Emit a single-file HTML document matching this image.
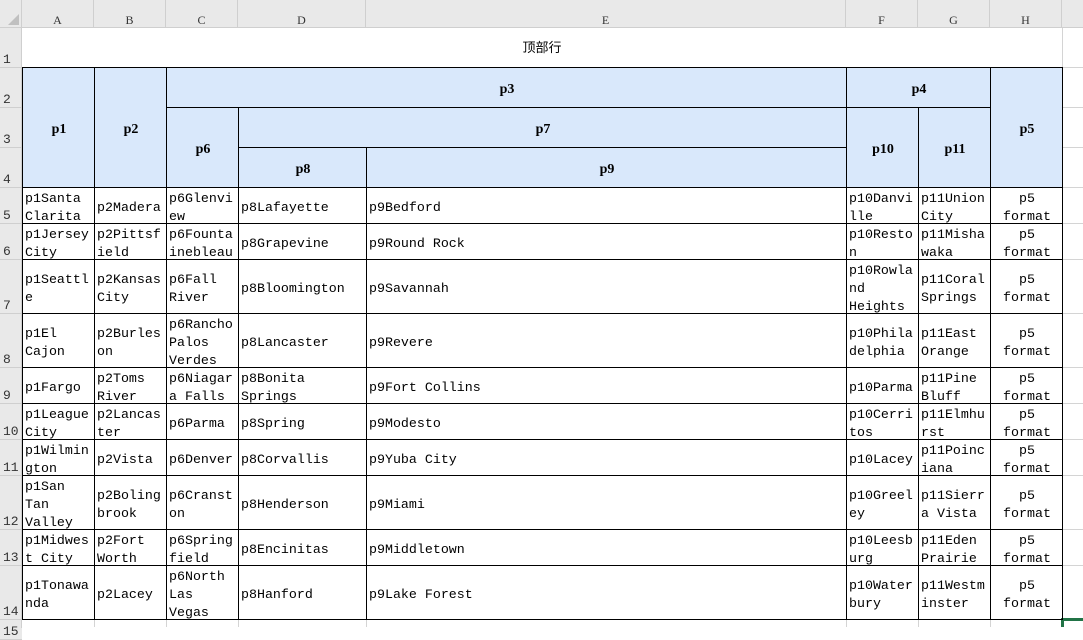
<!DOCTYPE html>
<html><head><meta charset="utf-8"><style>
body{margin:0;width:1083px;height:627px;overflow:hidden;background:#fff;position:relative;font-family:"Liberation Mono","Noto Sans CJK SC",monospace;font-size:13.3px;color:#000}
.c{position:absolute;box-sizing:border-box;border:1px solid #000;display:flex;flex-direction:column;justify-content:center;padding:4px 1px 0 2px;line-height:18px;white-space:pre;overflow:hidden}
.h{background:#d9e8fb;align-items:center;font-weight:bold;justify-content:center;font-family:"Liberation Serif","Noto Serif CJK SC",serif;font-size:14px}
.r{text-align:center;align-items:center}
.g{position:absolute;background:#d4d4d4}
.hd{position:absolute;top:0;height:28px;background:#e9e9e9;border-right:1px solid #cfcfcf;box-sizing:border-box;text-align:center;line-height:40px;font-size:12px;color:#333;font-family:"Liberation Serif",serif}
.rn{position:absolute;left:0;width:22px;background:#e9e9e9;border-bottom:1px solid #cfcfcf;box-sizing:border-box;font-size:13px;color:#333;padding-left:3px;display:flex;align-items:flex-end;line-height:15px}
</style></head><body>
<div class="hd" style="left:0;width:22px"></div>
<div style="position:absolute;left:8px;top:14px;width:0;height:0;border-left:11px solid transparent;border-bottom:11px solid #c0c0c0"></div>
<div class="hd" style="left:22px;width:72px">A</div>
<div class="hd" style="left:94px;width:72px">B</div>
<div class="hd" style="left:166px;width:72px">C</div>
<div class="hd" style="left:238px;width:128px">D</div>
<div class="hd" style="left:366px;width:480px">E</div>
<div class="hd" style="left:846px;width:72px">F</div>
<div class="hd" style="left:918px;width:72px">G</div>
<div class="hd" style="left:990px;width:72px">H</div>
<div class="hd" style="left:1062px;width:21px;border-right:none"></div>
<div style="position:absolute;left:0;top:27px;width:1083px;height:1px;background:#cfcfcf"></div>

<div class="rn" style="top:28px;height:40px">1</div>
<div class="rn" style="top:68px;height:40px">2</div>
<div class="rn" style="top:108px;height:40px">3</div>
<div class="rn" style="top:148px;height:40px">4</div>
<div class="rn" style="top:188px;height:36px">5</div>
<div class="rn" style="top:224px;height:36px">6</div>
<div class="rn" style="top:260px;height:54px">7</div>
<div class="rn" style="top:314px;height:54px">8</div>
<div class="rn" style="top:368px;height:36px">9</div>
<div class="rn" style="top:404px;height:36px">10</div>
<div class="rn" style="top:440px;height:36px">11</div>
<div class="rn" style="top:476px;height:54px">12</div>
<div class="rn" style="top:530px;height:36px">13</div>
<div class="rn" style="top:566px;height:54px">14</div>
<div class="rn" style="top:620px;height:20px">15</div>
<div style="position:absolute;left:21px;top:28px;width:1px;height:600px;background:#cfcfcf"></div>

<div class="g" style="left:1062px;top:67px;width:21px;height:1px"></div>
<div class="g" style="left:1062px;top:107px;width:21px;height:1px"></div>
<div class="g" style="left:1062px;top:147px;width:21px;height:1px"></div>
<div class="g" style="left:1062px;top:187px;width:21px;height:1px"></div>
<div class="g" style="left:1062px;top:223px;width:21px;height:1px"></div>
<div class="g" style="left:1062px;top:259px;width:21px;height:1px"></div>
<div class="g" style="left:1062px;top:313px;width:21px;height:1px"></div>
<div class="g" style="left:1062px;top:367px;width:21px;height:1px"></div>
<div class="g" style="left:1062px;top:403px;width:21px;height:1px"></div>
<div class="g" style="left:1062px;top:439px;width:21px;height:1px"></div>
<div class="g" style="left:1062px;top:475px;width:21px;height:1px"></div>
<div class="g" style="left:1062px;top:529px;width:21px;height:1px"></div>
<div class="g" style="left:1062px;top:565px;width:21px;height:1px"></div>
<div class="g" style="left:1062px;top:28px;width:1px;height:40px"></div>
<div class="g" style="left:94px;top:620px;width:1px;height:7px"></div>
<div class="g" style="left:166px;top:620px;width:1px;height:7px"></div>
<div class="g" style="left:238px;top:620px;width:1px;height:7px"></div>
<div class="g" style="left:366px;top:620px;width:1px;height:7px"></div>
<div class="g" style="left:846px;top:620px;width:1px;height:7px"></div>
<div class="g" style="left:918px;top:620px;width:1px;height:7px"></div>
<div class="g" style="left:990px;top:620px;width:1px;height:7px"></div>
<div style="position:absolute;left:1062px;top:618px;width:21px;height:3px;background:#217346"></div>
<div style="position:absolute;left:1061px;top:618px;width:3px;height:9px;background:#217346"></div>

<div style="position:absolute;left:22px;top:28px;width:1040px;height:40px;font-family:'Liberation Sans','Noto Sans CJK SC',sans-serif;font-size:13px;text-align:center;line-height:40px">顶部行</div>

<div class="c h" style="left:22px;top:67px;width:73px;height:121px">p1</div>
<div class="c h" style="left:94px;top:67px;width:73px;height:121px">p2</div>
<div class="c h" style="left:166px;top:67px;width:681px;height:41px">p3</div>
<div class="c h" style="left:846px;top:67px;width:145px;height:41px">p4</div>
<div class="c h" style="left:990px;top:67px;width:73px;height:121px">p5</div>
<div class="c h" style="left:166px;top:107px;width:73px;height:81px">p6</div>
<div class="c h" style="left:238px;top:107px;width:609px;height:41px">p7</div>
<div class="c h" style="left:238px;top:147px;width:129px;height:41px">p8</div>
<div class="c h" style="left:366px;top:147px;width:481px;height:41px">p9</div>
<div class="c h" style="left:846px;top:107px;width:73px;height:81px">p10</div>
<div class="c h" style="left:918px;top:107px;width:73px;height:81px">p11</div>

<div class="c" style="left:22px;top:187px;width:73px;height:37px">p1Santa
Clarita</div>
<div class="c" style="left:94px;top:187px;width:73px;height:37px">p2Madera</div>
<div class="c" style="left:166px;top:187px;width:73px;height:37px">p6Glenvi
ew</div>
<div class="c" style="left:238px;top:187px;width:129px;height:37px">p8Lafayette</div>
<div class="c" style="left:366px;top:187px;width:481px;height:37px">p9Bedford</div>
<div class="c" style="left:846px;top:187px;width:73px;height:37px">p10Danvi
lle</div>
<div class="c" style="left:918px;top:187px;width:73px;height:37px">p11Union
City</div>
<div class="c r" style="left:990px;top:187px;width:73px;height:37px">p5
format</div>
<div class="c" style="left:22px;top:223px;width:73px;height:37px">p1Jersey
City</div>
<div class="c" style="left:94px;top:223px;width:73px;height:37px">p2Pittsf
ield</div>
<div class="c" style="left:166px;top:223px;width:73px;height:37px">p6Founta
inebleau</div>
<div class="c" style="left:238px;top:223px;width:129px;height:37px">p8Grapevine</div>
<div class="c" style="left:366px;top:223px;width:481px;height:37px">p9Round Rock</div>
<div class="c" style="left:846px;top:223px;width:73px;height:37px">p10Resto
n</div>
<div class="c" style="left:918px;top:223px;width:73px;height:37px">p11Misha
waka</div>
<div class="c r" style="left:990px;top:223px;width:73px;height:37px">p5
format</div>
<div class="c" style="left:22px;top:259px;width:73px;height:55px">p1Seattl
e</div>
<div class="c" style="left:94px;top:259px;width:73px;height:55px">p2Kansas
City</div>
<div class="c" style="left:166px;top:259px;width:73px;height:55px">p6Fall
River</div>
<div class="c" style="left:238px;top:259px;width:129px;height:55px">p8Bloomington</div>
<div class="c" style="left:366px;top:259px;width:481px;height:55px">p9Savannah</div>
<div class="c" style="left:846px;top:259px;width:73px;height:55px">p10Rowla
nd
Heights</div>
<div class="c" style="left:918px;top:259px;width:73px;height:55px">p11Coral
Springs</div>
<div class="c r" style="left:990px;top:259px;width:73px;height:55px">p5
format</div>
<div class="c" style="left:22px;top:313px;width:73px;height:55px">p1El
Cajon</div>
<div class="c" style="left:94px;top:313px;width:73px;height:55px">p2Burles
on</div>
<div class="c" style="left:166px;top:313px;width:73px;height:55px">p6Rancho
Palos
Verdes</div>
<div class="c" style="left:238px;top:313px;width:129px;height:55px">p8Lancaster</div>
<div class="c" style="left:366px;top:313px;width:481px;height:55px">p9Revere</div>
<div class="c" style="left:846px;top:313px;width:73px;height:55px">p10Phila
delphia</div>
<div class="c" style="left:918px;top:313px;width:73px;height:55px">p11East
Orange</div>
<div class="c r" style="left:990px;top:313px;width:73px;height:55px">p5
format</div>
<div class="c" style="left:22px;top:367px;width:73px;height:37px">p1Fargo</div>
<div class="c" style="left:94px;top:367px;width:73px;height:37px">p2Toms
River</div>
<div class="c" style="left:166px;top:367px;width:73px;height:37px">p6Niagar
a Falls</div>
<div class="c" style="left:238px;top:367px;width:129px;height:37px">p8Bonita
Springs</div>
<div class="c" style="left:366px;top:367px;width:481px;height:37px">p9Fort Collins</div>
<div class="c" style="left:846px;top:367px;width:73px;height:37px">p10Parma</div>
<div class="c" style="left:918px;top:367px;width:73px;height:37px">p11Pine
Bluff</div>
<div class="c r" style="left:990px;top:367px;width:73px;height:37px">p5
format</div>
<div class="c" style="left:22px;top:403px;width:73px;height:37px">p1League
City</div>
<div class="c" style="left:94px;top:403px;width:73px;height:37px">p2Lancas
ter</div>
<div class="c" style="left:166px;top:403px;width:73px;height:37px">p6Parma</div>
<div class="c" style="left:238px;top:403px;width:129px;height:37px">p8Spring</div>
<div class="c" style="left:366px;top:403px;width:481px;height:37px">p9Modesto</div>
<div class="c" style="left:846px;top:403px;width:73px;height:37px">p10Cerri
tos</div>
<div class="c" style="left:918px;top:403px;width:73px;height:37px">p11Elmhu
rst</div>
<div class="c r" style="left:990px;top:403px;width:73px;height:37px">p5
format</div>
<div class="c" style="left:22px;top:439px;width:73px;height:37px">p1Wilmin
gton</div>
<div class="c" style="left:94px;top:439px;width:73px;height:37px">p2Vista</div>
<div class="c" style="left:166px;top:439px;width:73px;height:37px">p6Denver</div>
<div class="c" style="left:238px;top:439px;width:129px;height:37px">p8Corvallis</div>
<div class="c" style="left:366px;top:439px;width:481px;height:37px">p9Yuba City</div>
<div class="c" style="left:846px;top:439px;width:73px;height:37px">p10Lacey</div>
<div class="c" style="left:918px;top:439px;width:73px;height:37px">p11Poinc
iana</div>
<div class="c r" style="left:990px;top:439px;width:73px;height:37px">p5
format</div>
<div class="c" style="left:22px;top:475px;width:73px;height:55px">p1San
Tan
Valley</div>
<div class="c" style="left:94px;top:475px;width:73px;height:55px">p2Boling
brook</div>
<div class="c" style="left:166px;top:475px;width:73px;height:55px">p6Cranst
on</div>
<div class="c" style="left:238px;top:475px;width:129px;height:55px">p8Henderson</div>
<div class="c" style="left:366px;top:475px;width:481px;height:55px">p9Miami</div>
<div class="c" style="left:846px;top:475px;width:73px;height:55px">p10Greel
ey</div>
<div class="c" style="left:918px;top:475px;width:73px;height:55px">p11Sierr
a Vista</div>
<div class="c r" style="left:990px;top:475px;width:73px;height:55px">p5
format</div>
<div class="c" style="left:22px;top:529px;width:73px;height:37px">p1Midwes
t City</div>
<div class="c" style="left:94px;top:529px;width:73px;height:37px">p2Fort
Worth</div>
<div class="c" style="left:166px;top:529px;width:73px;height:37px">p6Spring
field</div>
<div class="c" style="left:238px;top:529px;width:129px;height:37px">p8Encinitas</div>
<div class="c" style="left:366px;top:529px;width:481px;height:37px">p9Middletown</div>
<div class="c" style="left:846px;top:529px;width:73px;height:37px">p10Leesb
urg</div>
<div class="c" style="left:918px;top:529px;width:73px;height:37px">p11Eden
Prairie</div>
<div class="c r" style="left:990px;top:529px;width:73px;height:37px">p5
format</div>
<div class="c" style="left:22px;top:565px;width:73px;height:55px">p1Tonawa
nda</div>
<div class="c" style="left:94px;top:565px;width:73px;height:55px">p2Lacey</div>
<div class="c" style="left:166px;top:565px;width:73px;height:55px">p6North
Las
Vegas</div>
<div class="c" style="left:238px;top:565px;width:129px;height:55px">p8Hanford</div>
<div class="c" style="left:366px;top:565px;width:481px;height:55px">p9Lake Forest</div>
<div class="c" style="left:846px;top:565px;width:73px;height:55px">p10Water
bury</div>
<div class="c" style="left:918px;top:565px;width:73px;height:55px">p11Westm
inster</div>
<div class="c r" style="left:990px;top:565px;width:73px;height:55px">p5
format</div>
</body></html>
